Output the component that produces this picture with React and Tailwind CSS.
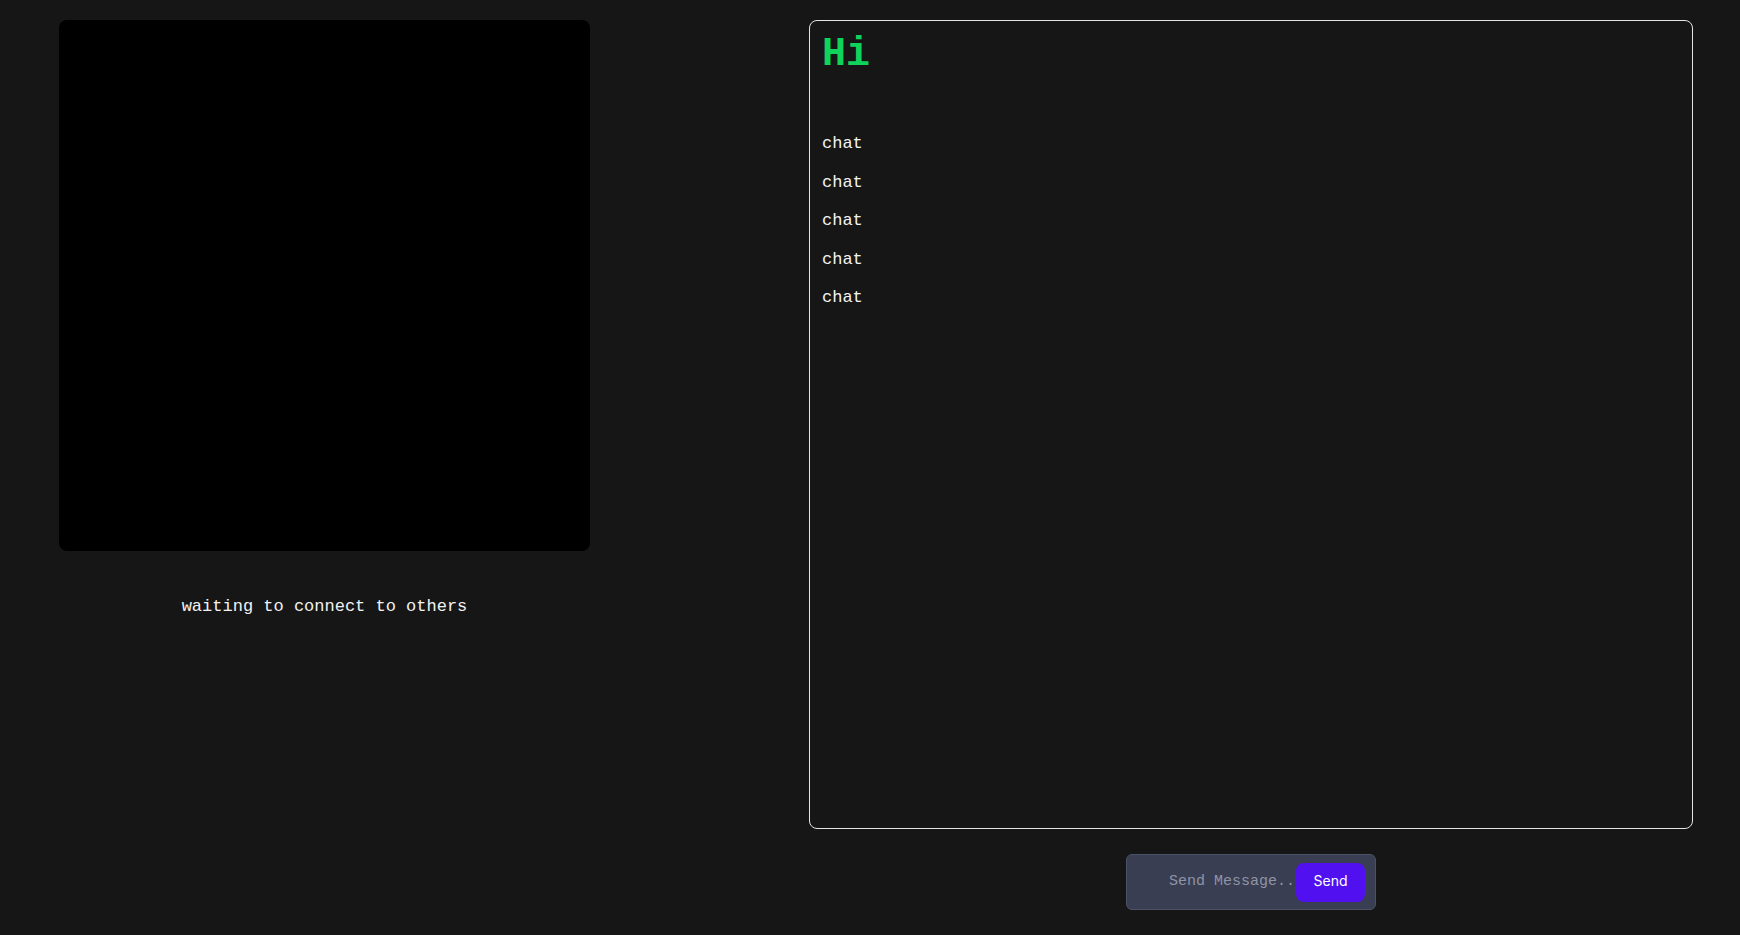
export default function App() {
  const chats = ["chat", "chat", "chat", "chat", "chat"];
  return (
    <div className="min-h-[935px] w-full bg-[#161616] text-white" style={{ fontFamily: '"Liberation Mono", monospace' }}>
      <div className="flex items-start pt-5">
        <div className="ml-[59px] flex w-[531px] flex-col items-center">
          <div className="h-[531px] w-[531px] rounded-lg bg-black" />
          <p className="mt-[43px] text-[17px] leading-[25px] text-[#f2f2f2]">waiting to connect to others</p>
        </div>
        <div className="ml-[219px] flex w-[884px] flex-col items-center">
          <div className="h-[809px] w-full rounded-lg border border-[#e4e4e4] p-3">
            <h1 className="text-[40px] font-bold leading-[44px] text-[#10d35c]">Hi</h1>
            <div className="mt-[54px] flex flex-col gap-[13px]">
              {chats.map((c, i) => (
                <p key={i} className="text-[17px] leading-[25.5px] text-[#f2f2f2]">{c}</p>
              ))}
            </div>
          </div>
          <div className="mt-[25px] flex h-[56px] w-[250px] items-center rounded-md border border-[#4b5166] bg-[#393e52] pl-[42px] pr-[10px]">
            <input
              className="min-w-0 flex-1 bg-transparent text-[15px] text-white outline-none placeholder:text-[#8f94a6]"
              placeholder="Send Message.."
              style={{ fontFamily: '"Liberation Mono", monospace' }}
            />
            <button
              className="flex h-[39px] w-[69px] shrink-0 items-center justify-center rounded-lg bg-[#5010f0] pb-[3px] text-sm text-white"
              style={{ fontFamily: 'Inter, sans-serif' }}
            >
              Send
            </button>
          </div>
        </div>
      </div>
    </div>
  );
}
